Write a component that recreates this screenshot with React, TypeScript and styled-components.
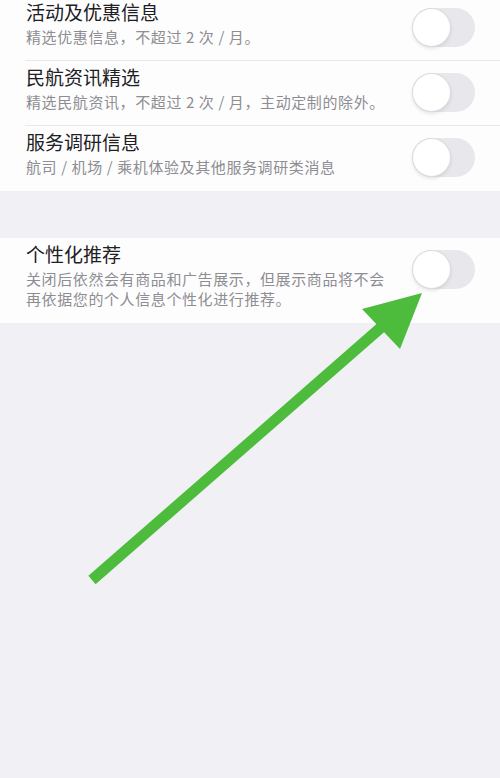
import React from 'react';
import styled, { createGlobalStyle } from 'styled-components';

type Setting = { title: string; desc: string };

const topSettings: Setting[] = [
  { title: '活动及优惠信息', desc: '精选优惠信息，不超过 2 次 / 月。' },
  { title: '民航资讯精选', desc: '精选民航资讯，不超过 2 次 / 月，主动定制的除外。' },
  { title: '服务调研信息', desc: '航司 / 机场 / 乘机体验及其他服务调研类消息' },
];

const GlobalStyle = createGlobalStyle`
  html, body {
    margin: 0;
    padding: 0;
    background: #f1f1f5;
    font-family: "Noto Sans CJK SC", "Noto Sans", sans-serif;
  }
`;

const Page = styled.div`
  position: relative;
  width: 500px;
  height: 778px;
  overflow: hidden;
  background: #f1f1f5;
`;

const Card = styled.div<{ $offset?: number; $extra?: number }>`
  background: #fdfdfe;
  margin-top: ${(p) => p.$offset ?? 0}px;
  padding-bottom: ${(p) => p.$extra ?? 0}px;
`;

const Row = styled.div<{ $divider?: boolean }>`
  position: relative;
  display: flex;
  align-items: flex-start;
  padding: 5px 25px 11px 26px;
  min-height: 49px;
  ${(p) =>
    p.$divider &&
    `
    &::after {
      content: '';
      position: absolute;
      left: 25px;
      right: 0;
      bottom: 0;
      height: 1px;
      background: #e8e8ec;
    }
  `}
`;

const Text = styled.div`
  flex: 1;
  min-width: 0;
`;

const Title = styled.div`
  font-size: 19px;
  line-height: 22px;
  color: #202022;
`;

const Desc = styled.div`
  margin-top: 4px;
  font-size: 15px;
  line-height: 20px;
  color: #8d8d92;
  letter-spacing: 0.6px;
  max-width: 372px;
`;

const Toggle = styled.div`
  flex: none;
  position: relative;
  width: 63px;
  height: 39px;
  margin-top: 7px;
  border-radius: 20px;
  background: #e8e8ec;
  &::before {
    content: '';
    position: absolute;
    left: 1px;
    top: 1px;
    width: 37px;
    height: 37px;
    border-radius: 50%;
    background: #ffffff;
    box-shadow: 0 0 0 1px #dddde1, 0 2px 4px rgba(0, 0, 0, 0.14);
  }
`;

const Arrow = styled.svg`
  position: absolute;
  left: 0;
  top: 0;
  width: 500px;
  height: 778px;
  pointer-events: none;
`;

const SettingRow = ({ title, desc, divider }: Setting & { divider?: boolean }) => (
  <Row $divider={divider}>
    <Text>
      <Title>{title}</Title>
      <Desc>{desc}</Desc>
    </Text>
    <Toggle />
  </Row>
);

export default function App() {
  return (
    <>
      <GlobalStyle />
      <Page>
        <Card $offset={-4}>
          {topSettings.map((s, i) => (
            <SettingRow key={s.title} {...s} divider={i < topSettings.length - 1} />
          ))}
        </Card>
        <Card $offset={47} $extra={3}>
          <SettingRow
            title="个性化推荐"
            desc="关闭后依然会有商品和广告展示，但展示商品将不会再依据您的个人信息个性化进行推荐。"
          />
        </Card>
        <Arrow viewBox="0 0 500 778">
          <line x1="92" y1="580" x2="385" y2="324" stroke="#4dbb3b" strokeWidth="11" />
          <polygon points="422,293 362,309 400,349" fill="#4dbb3b" />
        </Arrow>
      </Page>
    </>
  );
}
